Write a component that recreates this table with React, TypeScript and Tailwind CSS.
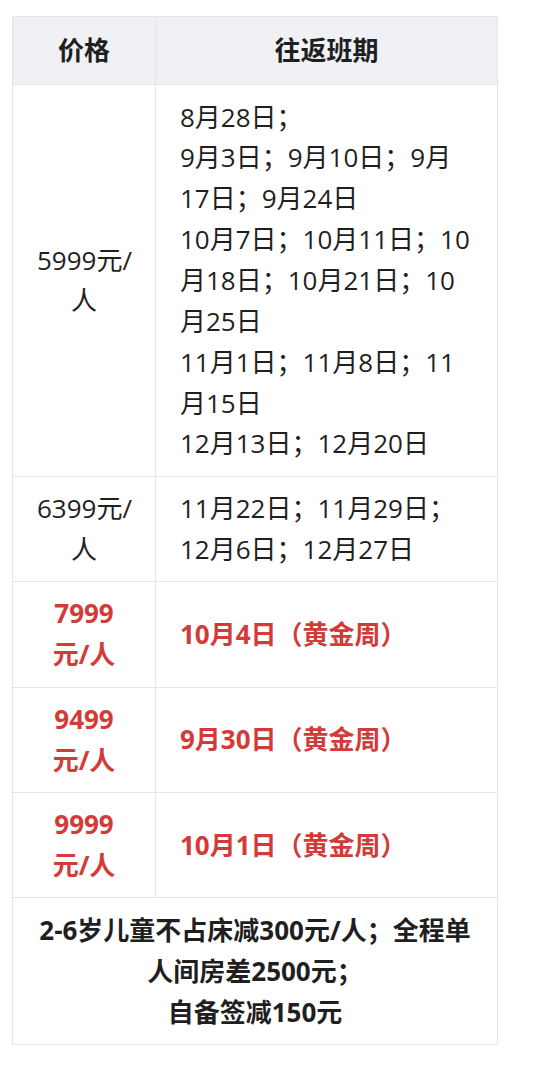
const FONT = "font-['Open_Sans','Noto_Sans_CJK_SC',sans-serif]";

interface ScheduleRow {
  price: string[];
  dates: string[];
  highlight?: boolean;
}

const rows: ScheduleRow[] = [
  {
    price: ['5999元/', '人'],
    dates: [
      '8月28日；',
      '9月3日；9月10日；9月',
      '17日；9月24日',
      '10月7日；10月11日；10',
      '月18日；10月21日；10',
      '月25日',
      '11月1日；11月8日；11',
      '月15日',
      '12月13日；12月20日',
    ],
  },
  {
    price: ['6399元/', '人'],
    dates: ['11月22日；11月29日；', '12月6日；12月27日'],
  },
  { price: ['7999', '元/人'], dates: ['10月4日（黄金周）'], highlight: true },
  { price: ['9499', '元/人'], dates: ['9月30日（黄金周）'], highlight: true },
  { price: ['9999', '元/人'], dates: ['10月1日（黄金周）'], highlight: true },
];

const notes = ['2-6岁儿童不占床减300元/人；全程单', '人间房差2500元；', '自备签减150元'];

function Lines({ lines }: { lines: string[] }) {
  return (
    <>
      {lines.map((line, i) => (
        <span key={i} className="block h-[40.85px] whitespace-nowrap">
          {line}
        </span>
      ))}
    </>
  );
}

export default function App() {
  const cell = 'border border-[#e5e5e5] px-6 py-[11.4px] align-middle';

  return (
    <div className={`min-h-screen bg-white pl-3 pt-4 ${FONT}`}>
      <table className="w-[485px] table-fixed border-collapse text-[26px] leading-[40.85px] text-[#1f1f1f]">
        <colgroup>
          <col className="w-[143px]" />
          <col className="w-[342px]" />
        </colgroup>
        <thead>
          <tr className="bg-[#f0f1f4]">
            <th className={`${cell} py-[13.2px] text-center font-bold`}>
              <Lines lines={['价格']} />
            </th>
            <th className={`${cell} py-[13.2px] text-center font-bold`}>
              <Lines lines={['往返班期']} />
            </th>
          </tr>
        </thead>
        <tbody>
          {rows.map((row, index) => {
            const tone = row.highlight ? 'font-bold text-[#d23b37]' : '';
            return (
              <tr key={index}>
                <td className={`${cell} text-center ${tone}`}>
                  <Lines lines={row.price} />
                </td>
                <td className={`${cell} text-left ${tone}`}>
                  <Lines lines={row.dates} />
                </td>
              </tr>
            );
          })}
          <tr>
            <td colSpan={2} className={`${cell} text-center font-bold`}>
              <Lines lines={notes} />
            </td>
          </tr>
        </tbody>
      </table>
    </div>
  );
}
